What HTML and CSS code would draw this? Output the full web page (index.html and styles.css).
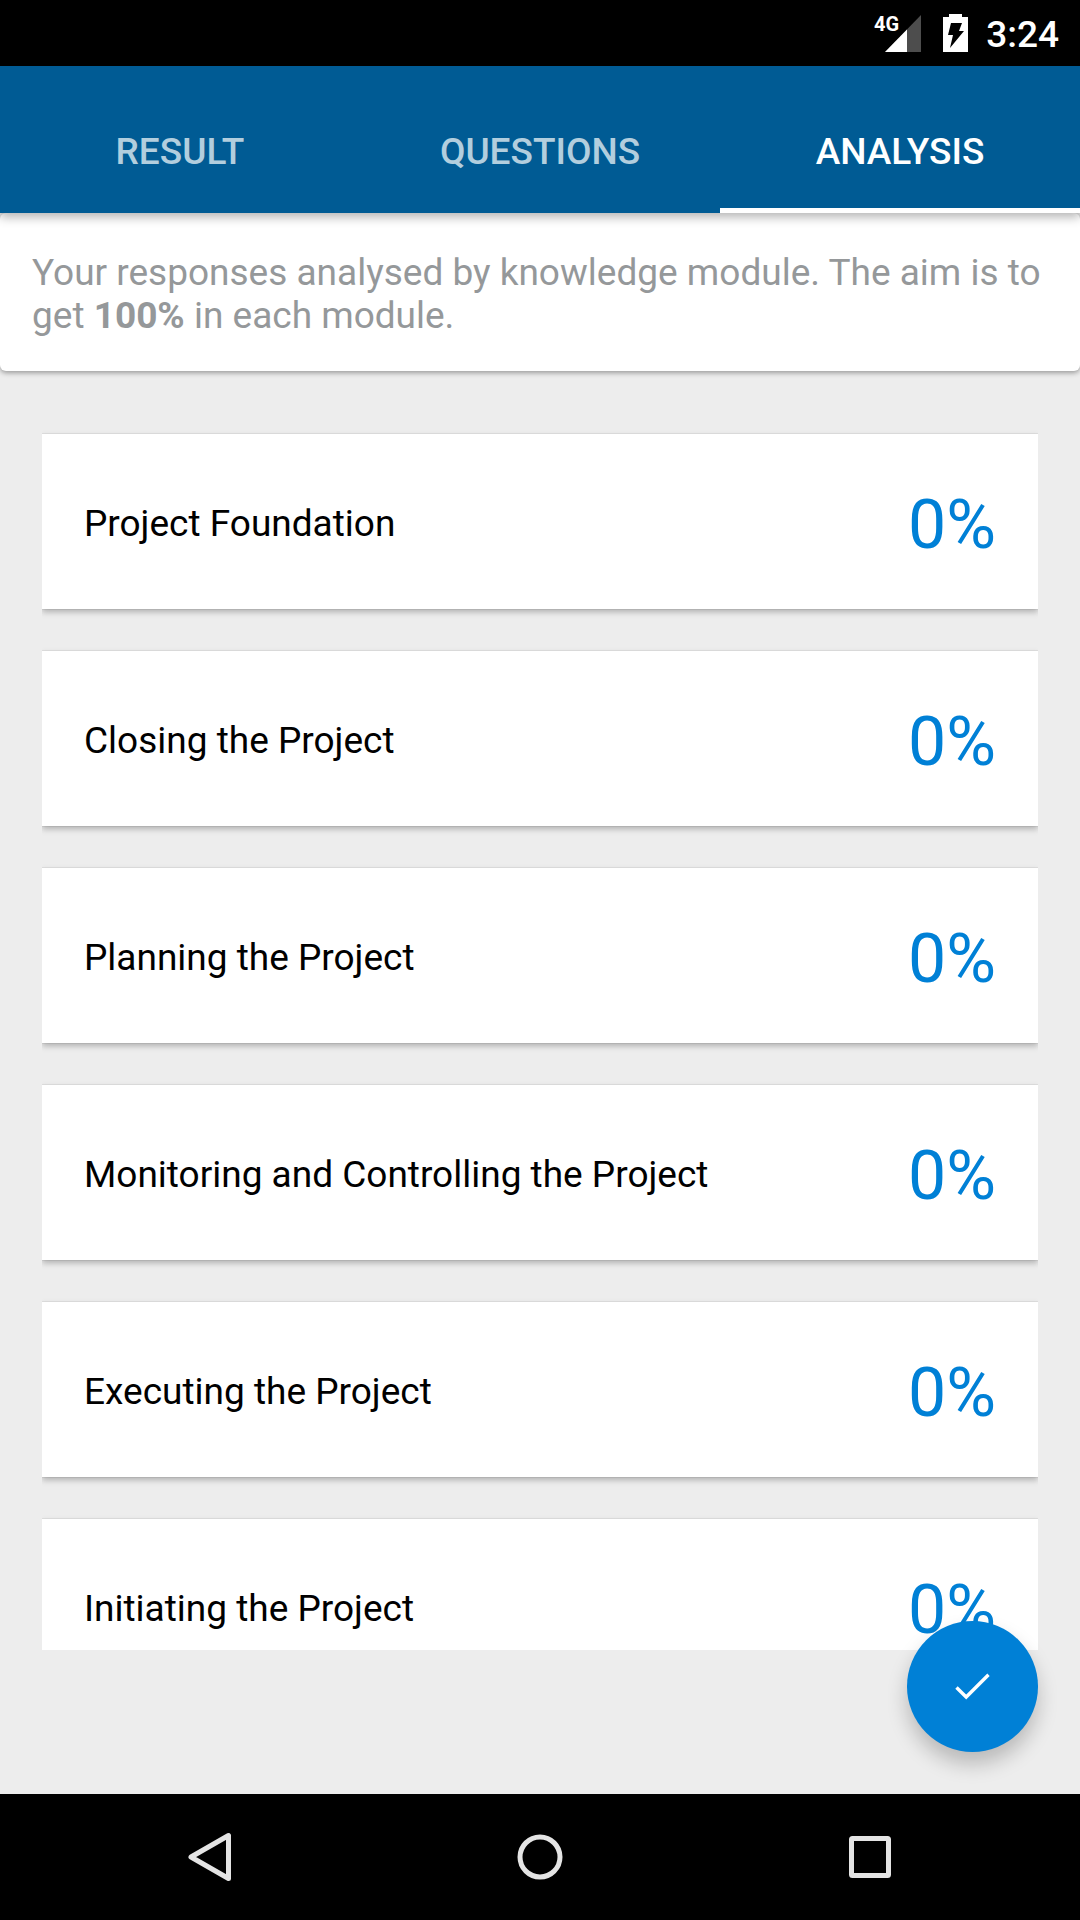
FILE: index.html
```html
<!DOCTYPE html>
<html lang="en">
<head>
  <meta charset="UTF-8" />
  <meta name="viewport" content="width=device-width, initial-scale=1.0"/>
  <title>Analysis</title>
  <link rel="stylesheet" href="styles.css">
</head>
<body>
  <div class="status-bar">
    <div class="signal">
      <span class="network">4G</span>
      <svg width="36" height="37" viewBox="0 0 36 37">
        <path d="M36 0V37H0z" fill="#4d4d4d"/>
        <path d="M22 14.4V37H0z" fill="#fff"/>
      </svg>
    </div>
    <svg class="battery" width="25" height="38" viewBox="0 0 25 38">
      <path d="M6 0h13v3h6v35H0V3h6z" fill="#fff"/>
      <path d="M8 9h11l-3 8h5L7 34l3-13H5z" fill="#000"/>
    </svg>
    <span class="time">3:24</span>
  </div>

  <header class="tabs" role="tablist">
    <button class="tab" role="tab">RESULT</button>
    <button class="tab" role="tab">QUESTIONS</button>
    <button class="tab active" role="tab" aria-selected="true">ANALYSIS</button>
  </header>

  <main>
    <p class="intro">Your responses analysed by knowledge module. The aim is to get <b>100%</b> in each module.</p>

    <ul class="modules">
      <li class="module"><span>Project Foundation</span><span class="score">0%</span></li>
      <li class="module"><span>Closing the Project</span><span class="score">0%</span></li>
      <li class="module"><span>Planning the Project</span><span class="score">0%</span></li>
      <li class="module"><span>Monitoring and Controlling the Project</span><span class="score">0%</span></li>
      <li class="module"><span>Executing the Project</span><span class="score">0%</span></li>
      <li class="module"><span>Initiating the Project</span><span class="score">0%</span></li>
    </ul>

    <button class="fab" aria-label="Done">
      <svg width="35" height="27" viewBox="0 0 35 27">
        <path d="M1.5 14.5L11.2 24 33.5 1.8" fill="none" stroke="#fff" stroke-width="3.4"/>
      </svg>
    </button>
  </main>

  <nav class="nav-bar">
    <button aria-label="Back">
      <svg width="50" height="50" viewBox="0 0 50 50">
        <path d="M43.5 3.5v43L6 25z"/>
      </svg>
    </button>
    <button aria-label="Home">
      <svg width="50" height="50" viewBox="0 0 50 50">
        <circle cx="25" cy="25" r="20"/>
      </svg>
    </button>
    <button aria-label="Recent apps">
      <svg width="50" height="50" viewBox="0 0 50 50">
        <rect x="6.5" y="6.5" width="37" height="37" rx="1"/>
      </svg>
    </button>
  </nav>
</body>
</html>
```
FILE: styles.css
```css
* {
  box-sizing: border-box;
}
body {
  margin: 0;
  height: 100vh;
  display: flex;
  flex-direction: column;
  background: #ededed;
  font-family: Roboto, sans-serif;
  font-size: 37px;
  line-height: 43px;
}
button {
  padding: 0;
  border: none;
  background: none;
  font: inherit;
  cursor: pointer;
}
svg {
  display: block;
}

/* status bar */
.status-bar {
  display: flex;
  justify-content: flex-end;
  align-items: center;
  height: 66px;
  padding-right: 21px;
  background: #000;
  color: #fff;
}
.signal {
  position: relative;
}
.network {
  position: absolute;
  right: 22px;
  top: 0;
  font-size: 20px;
  font-weight: 700;
  line-height: 18px;
}
.battery {
  margin: 0 18px 0 22px;
}
.time {
  padding-top: 2px;
  font-weight: 500;
}

/* tabs */
.tabs {
  position: relative;
  z-index: 1;
  display: grid;
  grid-template-columns: repeat(3, 1fr);
  padding-top: 21px;
  background: #005b94;
  box-shadow: 0 4px 10px rgba(0, 0, 0, 0.3);
}
.tab {
  height: 126px;
  padding-top: 7px;
  border-bottom: 5px solid transparent;
  color: #b2cede;
  font-weight: 500;
}
.tab.active {
  color: #fff;
  border-bottom-color: #fff;
}

/* content */
main {
  position: relative;
  flex: 1;
  min-height: 0;
  display: flex;
  flex-direction: column;
}
.intro {
  margin: 0;
  padding: 38px 32px 34px;
  background: #fff;
  border-radius: 6px;
  box-shadow: 0 2px 5px rgba(0, 0, 0, 0.35);
  color: #95989a;
}
.modules {
  flex: 1;
  min-height: 0;
  margin: 21px 42px 144px;
  padding: 42px 0 0;
  overflow-y: auto;
  scrollbar-width: none;
  list-style: none;
}
.module {
  display: flex;
  justify-content: space-between;
  align-items: center;
  height: 175px;
  margin-bottom: 42px;
  padding: 4px 42px 0;
  background: #fff;
  box-shadow: 0 3px 6px rgba(0, 0, 0, 0.26), 0 0 1px rgba(0, 0, 0, 0.3);
  color: #000;
}
.score {
  padding-top: 4px;
  color: #0080d6;
  font-size: 68px;
}
.fab {
  position: absolute;
  right: 42px;
  bottom: 42px;
  display: flex;
  justify-content: center;
  align-items: center;
  width: 131px;
  height: 131px;
  border-radius: 50%;
  background: #0080d6;
  box-shadow: 0 12px 20px rgba(0, 0, 0, 0.22);
}

/* navigation bar */
.nav-bar {
  display: grid;
  grid-template-columns: repeat(3, 1fr);
  height: 126px;
  padding: 0 45px;
  background: #000;
}
.nav-bar button {
  display: flex;
  justify-content: center;
  align-items: center;
}
.nav-bar svg {
  fill: none;
  stroke: #e4e4e4;
  stroke-width: 5;
  stroke-linejoin: round;
}
```
